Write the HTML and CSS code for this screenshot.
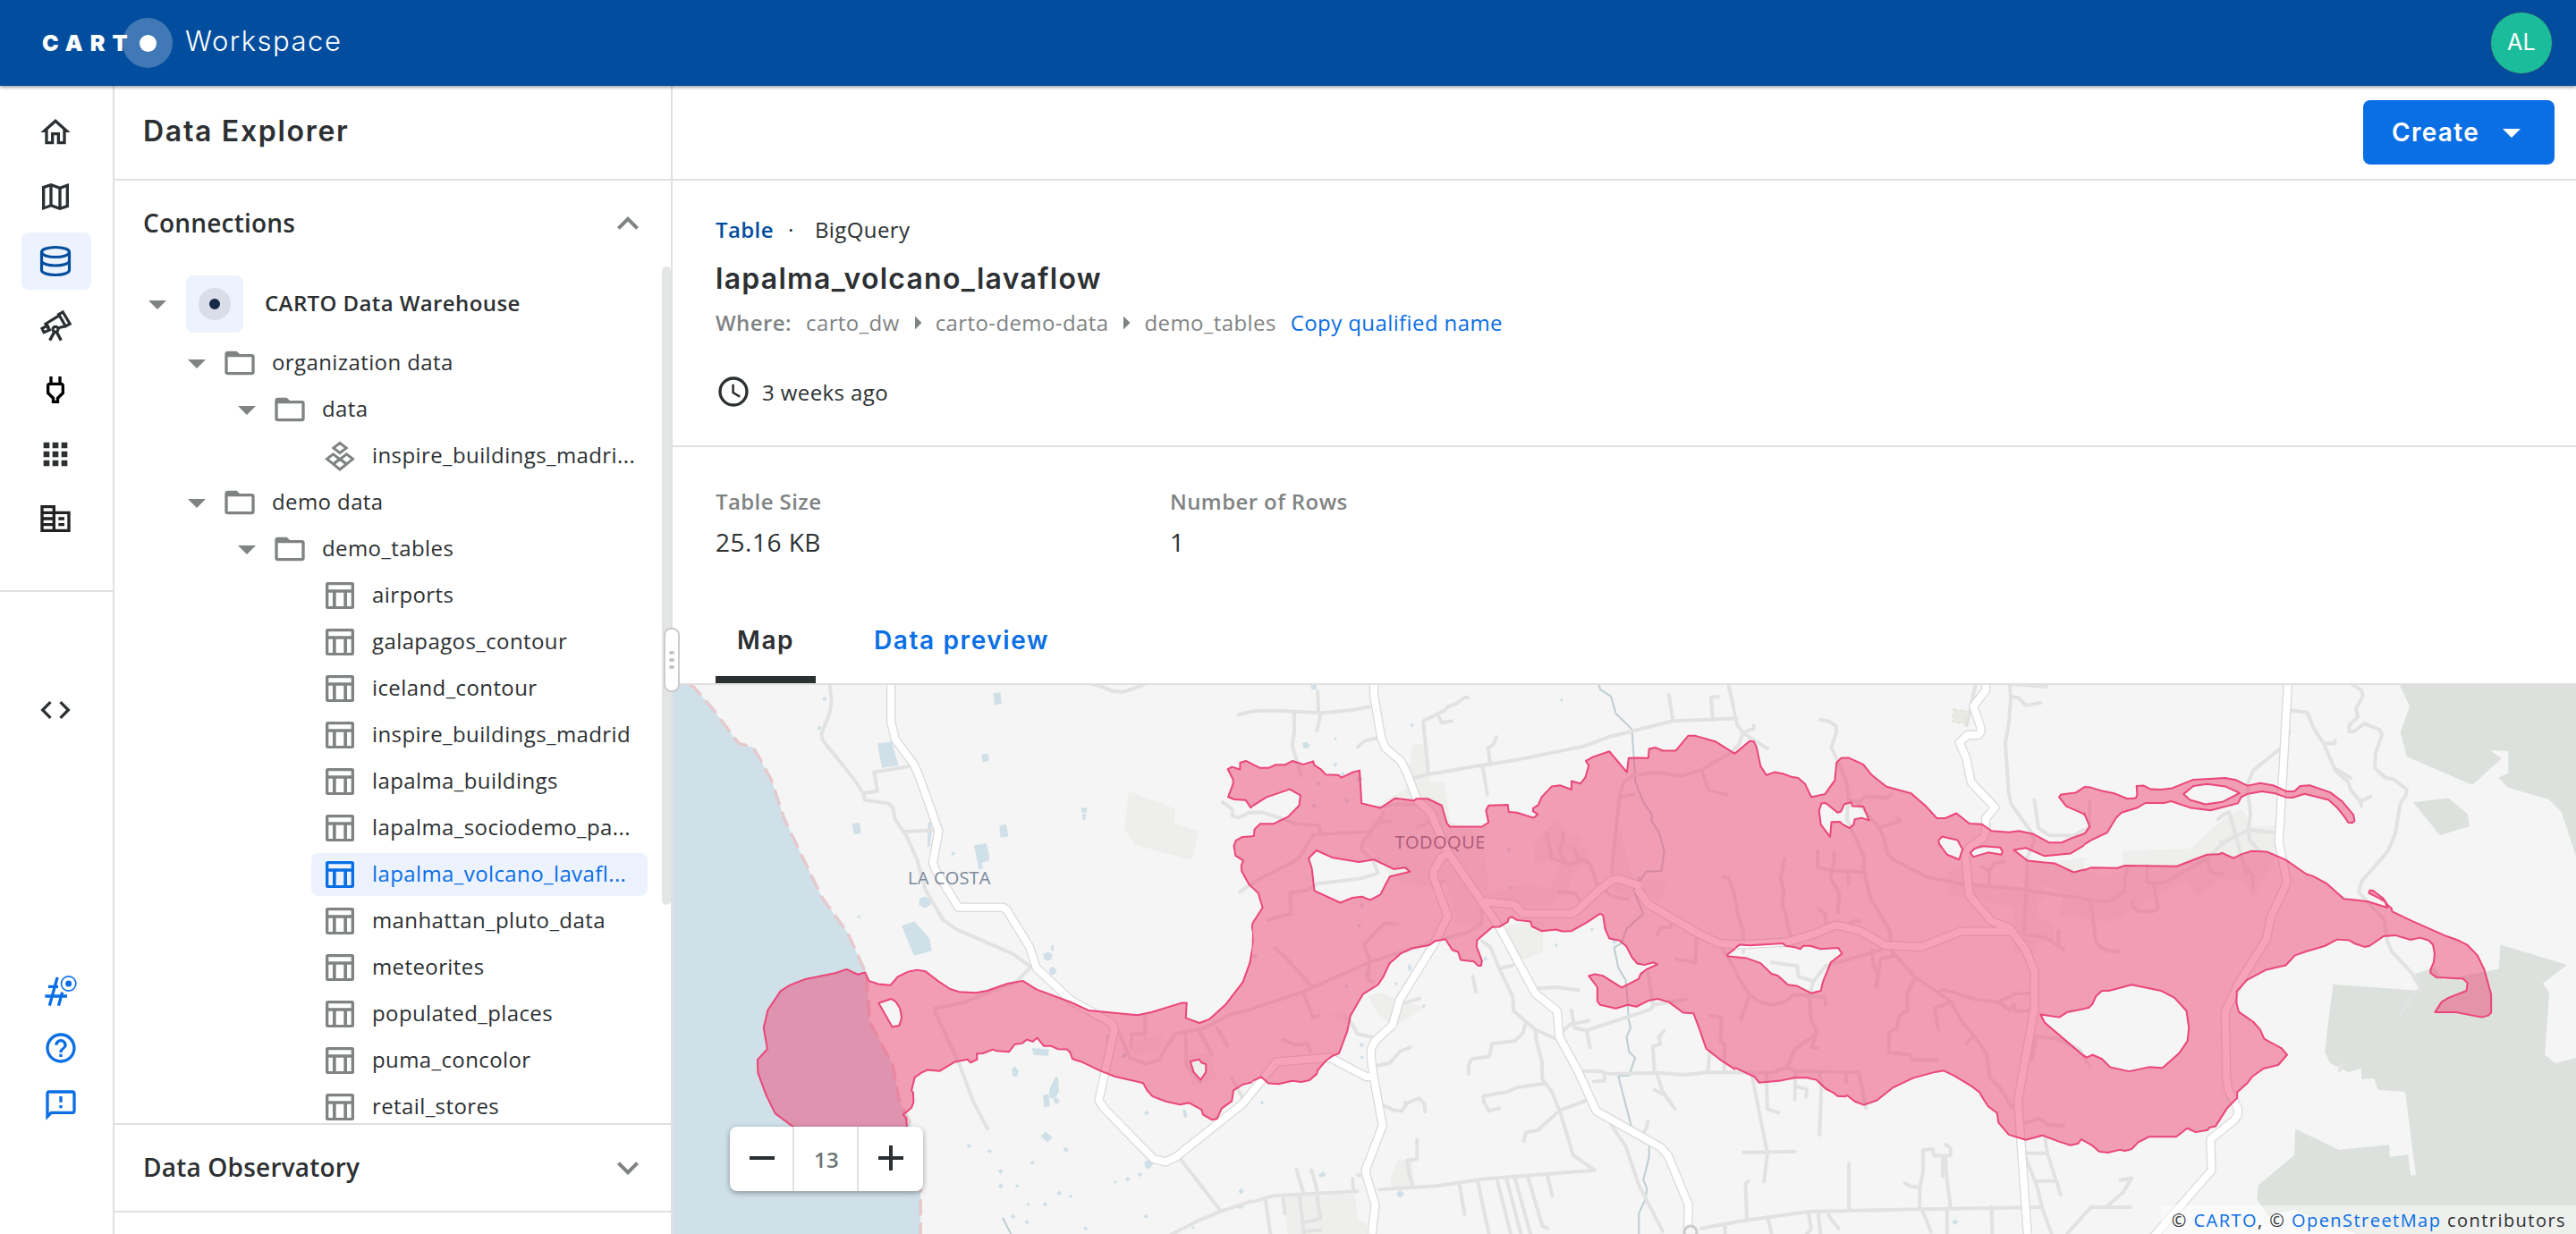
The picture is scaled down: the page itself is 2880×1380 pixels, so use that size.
FILE: index.html
```html
<!DOCTYPE html>
<html lang="en">
<head>
<meta charset="utf-8">
<title>Data Explorer - CARTO Workspace</title>
<link rel="stylesheet" href="styles.css">
</head>
<body>
<svg class="sprite" aria-hidden="true">
  <symbol id="i-home" viewBox="0 0 24 24"><path d="M12 5.69l5 4.5V18h-2v-6H9v6H7v-7.81l5-4.5M12 3 2 12h3v8h6v-6h2v6h6v-8h3L12 3z"/></symbol>
  <symbol id="i-map" viewBox="0 0 24 24"><path fill-rule="evenodd" d="M3 4.9 9 3l6 2.1L21 3v16l-6 2-6-2.1L3 21zM10 5.47v11.66l4 1.4V6.87zM5 6.4v12l3-1.2V5.45zM16 6.86v11.69l3-1.01V5.7z"/></symbol>
  <symbol id="i-db" viewBox="0 0 24 24"><g fill="none" stroke="currentColor" stroke-width="1.9"><ellipse cx="12" cy="6" rx="9.3" ry="3.3"/><path d="M2.7 6v12.2c0 1.7 4.1 3.1 9.3 3.1s9.3-1.4 9.3-3.1V6M2.7 11.9c0 1.7 4.1 3.1 9.3 3.1s9.3-1.4 9.3-3.1"/></g></symbol>
  <symbol id="i-tele" viewBox="0 0 24 24"><g fill="none" stroke="currentColor" stroke-width="1.9"><path d="M17 3l4.7 7.9-2.9 1.6-4.6-7.9zM14.5 5.3 5.4 10.9l2.8 4.6M18.6 12.4l-4.7 1.3"/><path d="M6.6 12 3 14l1.3 2.6L8 15z"/><circle cx="12" cy="14.6" r="1.8"/><path d="M11.3 16.3 8.2 22M12.7 16.3l3.1 5.7" stroke-width="2"/></g></symbol>
  <symbol id="i-plug" viewBox="0 0 24 24"><path d="M16 9v4.66l-3.5 3.51V19h-1v-1.83L8 13.65V9h8m0-6h-2v4h-4V3H8v4h-.01C6.9 6.99 6 7.89 6 8.98v5.52L9.5 18v3h5v-3l3.500-3.510V9c0-1.100-.900-2-2-2V3z"/></symbol>
  <symbol id="i-apps" viewBox="0 0 24 24"><path d="M4 8h4V4H4v4zm6 12h4v-4h-4v4zm-6 0h4v-4H4v4zm0-6h4v-4H4v4zm6 0h4v-4h-4v4zm6-10v4h4V4h-4zm-6 4h4V4h-4v4zm6 6h4v-4h-4v4zm0 6h4v-4h-4v4z"/></symbol>
  <symbol id="i-org" viewBox="0 0 24 24"><path d="M12 7V3H2v18h20V7H12zM10 19H4v-2h6v2zm0-4H4v-2h6v2zm0-4H4V9h6v2zm0-4H4V5h6v2zm10 12h-8V9h8v10zm-2-8h-4v2h4v-2zm0 4h-4v2h4v-2z"/></symbol>
  <symbol id="i-code" viewBox="0 0 24 24"><path d="M9.4 16.6 4.800 12l4.600-4.600L8 6l-6 6 6 6 1.400-1.400zm5.200 0 4.600-4.600-4.600-4.600L16 6l6 6-6 6-1.400-1.400z"/></symbol>
  <symbol id="i-hash" viewBox="0 0 24 24"><g fill="none" stroke="currentColor" stroke-width="2"><path d="M9.700 3 4.400 22M13 13l-2.500 9M3.600 9.200h6.600M1.400 15.600h14.800"/><circle cx="17.200" cy="7.200" r="4.900" stroke-width="1"/></g><circle cx="17.200" cy="7.200" r="2.100"/></symbol>
  <symbol id="i-help" viewBox="0 0 24 24"><path d="M11 18h2v-2h-2v2zm1-16C6.480 2 2 6.480 2 12s4.480 10 10 10 10-4.480 10-10S17.520 2 12 2zm0 18c-4.410 0-8-3.590-8-8s3.590-8 8-8 8 3.590 8 8-3.590 8-8 8zm0-14c-2.210 0-4 1.790-4 4h2c0-1.100.900-2 2-2s2 .900 2 2c0 2-3 1.750-3 5h2c0-2.250 3-2.500 3-5 0-2.210-1.790-4-4-4z"/></symbol>
  <symbol id="i-feedback" viewBox="0 0 24 24"><path d="M20 2H4c-1.100 0-1.990.900-1.990 2L2 22l4-4h14c1.100 0 2-.900 2-2V4c0-1.100-.900-2-2-2zm0 14H5.170L4 17.170V4h16v12zm-9-4h2v2h-2zm0-6h2v4h-2z"/></symbol>
  <symbol id="i-down" viewBox="0 0 24 24"><path d="M7 10l5 5 5-5z"/></symbol>
  <symbol id="i-right" viewBox="0 0 24 24"><path d="M10 17l5-5-5-5z"/></symbol>
  <symbol id="i-more" viewBox="0 0 24 24"><path d="M16.590 8.590 12 13.170 7.410 8.590 6 10l6 6 6-6z"/></symbol>
  <symbol id="i-less" viewBox="0 0 24 24"><path d="M12 8l-6 6 1.410 1.410L12 10.830l4.590 4.580L18 14z"/></symbol>
  <symbol id="i-folder" viewBox="0 0 24 24"><path fill-rule="evenodd" d="M10 4H4a2 2 0 0 0-2 2v12a2 2 0 0 0 2 2h16a2 2 0 0 0 2-2V8a2 2 0 0 0-2-2h-8zM4 8v10h16V8z"/></symbol>
  <symbol id="i-tiles" viewBox="0 0 24 24"><path fill="none" stroke="currentColor" stroke-width="1.800" d="M12 3.200l4.300 3.400L12 10 7.700 6.600zM7.500 10.700l4.200 3.300-4.200 3.300L3.300 14zM16.500 10.700l4.200 3.300-4.200 3.300-4.200-3.300zM7.700 17.500 12 21l4.300-3.500L12 14z"/></symbol>
  <symbol id="i-table" viewBox="0 0 24 24"><path fill-rule="evenodd" d="M3.900 3h16.200a1.500 1.500 0 0 1 1.500 1.500v15a1.500 1.500 0 0 1-1.500 1.500H3.900a1.500 1.500 0 0 1-1.500-1.500v-15A1.500 1.500 0 0 1 3.900 3zM4.400 4.900V8h15.200V4.900zM4.400 10v9.200h2.800V10zM9.400 10v9.200h5.200V10zM16.800 10v9.200h2.800V10z"/></symbol>
  <symbol id="i-clock" viewBox="0 0 24 24"><g fill="none" stroke="currentColor"><circle cx="12" cy="12" r="9" stroke-width="2"/><path d="M11.750 7v5.600l4.600 2.800" stroke-width="1.500"/></g></symbol>
</svg>

<header class="topbar">
  <div class="logo"><span class="logo-text">CART</span><span class="logo-halo"><i></i></span></div>
  <span class="product">Workspace</span>
  <span class="avatar">AL</span>
</header>

<div class="shell">
  <nav class="rail">
    <div class="rail-main">
      <a class="rail-item"><svg><use href="#i-home"/></svg></a>
      <a class="rail-item"><svg><use href="#i-map"/></svg></a>
      <a class="rail-item active"><svg><use href="#i-db"/></svg></a>
      <a class="rail-item"><svg><use href="#i-tele"/></svg></a>
      <a class="rail-item black"><svg><use href="#i-plug"/></svg></a>
      <a class="rail-item"><svg><use href="#i-apps"/></svg></a>
      <a class="rail-item dark"><svg><use href="#i-org"/></svg></a>
    </div>
    <div class="rail-dev"><a class="rail-item"><svg><use href="#i-code"/></svg></a></div>
    <div class="rail-foot">
      <svg><use href="#i-hash"/></svg>
      <svg><use href="#i-help"/></svg>
      <svg><use href="#i-feedback"/></svg>
    </div>
  </nav>

  <aside class="sidebar">
    <h1 class="side-title">Data Explorer</h1>
    <section class="connections">
      <div class="section-head"><h2>Connections</h2><svg><use href="#i-less"/></svg></div>
      <div class="tree">
        <div class="row root"><svg class="caret"><use href="#i-down"/></svg><span class="badge"><i></i></span><b>CARTO Data Warehouse</b></div>
        <div class="row l1"><svg class="caret"><use href="#i-down"/></svg><svg class="ico"><use href="#i-folder"/></svg><span>organization data</span></div>
        <div class="row l2"><svg class="caret"><use href="#i-down"/></svg><svg class="ico"><use href="#i-folder"/></svg><span>data</span></div>
        <div class="row leaf"><svg class="ico"><use href="#i-tiles"/></svg><span>inspire_buildings_madri...</span></div>
        <div class="row l1"><svg class="caret"><use href="#i-down"/></svg><svg class="ico"><use href="#i-folder"/></svg><span>demo data</span></div>
        <div class="row l2"><svg class="caret"><use href="#i-down"/></svg><svg class="ico"><use href="#i-folder"/></svg><span>demo_tables</span></div>
        <div class="row leaf"><svg class="ico"><use href="#i-table"/></svg><span>airports</span></div>
        <div class="row leaf"><svg class="ico"><use href="#i-table"/></svg><span>galapagos_contour</span></div>
        <div class="row leaf"><svg class="ico"><use href="#i-table"/></svg><span>iceland_contour</span></div>
        <div class="row leaf"><svg class="ico"><use href="#i-table"/></svg><span>inspire_buildings_madrid</span></div>
        <div class="row leaf"><svg class="ico"><use href="#i-table"/></svg><span>lapalma_buildings</span></div>
        <div class="row leaf"><svg class="ico"><use href="#i-table"/></svg><span>lapalma_sociodemo_pa...</span></div>
        <div class="row leaf selected"><svg class="ico"><use href="#i-table"/></svg><span>lapalma_volcano_lavafl...</span></div>
        <div class="row leaf"><svg class="ico"><use href="#i-table"/></svg><span>manhattan_pluto_data</span></div>
        <div class="row leaf"><svg class="ico"><use href="#i-table"/></svg><span>meteorites</span></div>
        <div class="row leaf"><svg class="ico"><use href="#i-table"/></svg><span>populated_places</span></div>
        <div class="row leaf"><svg class="ico"><use href="#i-table"/></svg><span>puma_concolor</span></div>
        <div class="row leaf"><svg class="ico"><use href="#i-table"/></svg><span>retail_stores</span></div>
      </div>
      <div class="scrollbar"></div>
    </section>
    <div class="section-head observatory"><h2>Data Observatory</h2><svg><use href="#i-more"/></svg></div>
    <div class="resizer"><i></i><i></i><i></i></div>
  </aside>

  <main class="main">
    <div class="toolbar"><button class="create">Create<svg><use href="#i-down"/></svg></button></div>
    <section class="summary">
      <p class="kind"><b>Table</b><span class="dot">·</span><span>BigQuery</span></p>
      <h2 class="name">lapalma_volcano_lavaflow</h2>
      <p class="where"><b>Where:</b><span>carto_dw</span><svg><use href="#i-right"/></svg><span>carto-demo-data</span><svg><use href="#i-right"/></svg><span>demo_tables</span><a>Copy qualified name</a></p>
      <p class="updated"><svg><use href="#i-clock"/></svg>3 weeks ago</p>
    </section>
    <section class="stats">
      <dl><dt>Table Size</dt><dd>25.16 KB</dd></dl>
      <dl><dt>Number of Rows</dt><dd>1</dd></dl>
    </section>
    <div class="tabs"><span class="tab current">Map</span><span class="tab">Data preview</span></div>

    <div class="map">
      <svg class="canvas" viewBox="752 766 2128 614">
        <svg x="750" y="760" width="650" height="620" viewBox="0 0 1415.6 1568" preserveAspectRatio="none">
          <defs><path id="road-a" d="M536 0V120L547 170 592 240 605 275 652 428 638 518 645 540 700 644H808L817 650 873 755 890 815 975 908 1072 970 1080 990 1042 1190 1055 1213 1175 1355 1205 1364 1230 1350 1392 1200 1475 1082 1600 1070"/></defs>
          <path class="sea" d="M0 0H35L55 20 100 80 165 180 200 192 215 220 245 285 275 390 330 525 370 620 430 715 475 830 485 970 540 1090 556 1190 585 1260 608 1450 608 1568H0Z"/>
          <path class="land" d="M1115 315 1228 366 1226 408 1286 428 1269 511 1130 468 1105 425zM1125 1020 1200 1005 1190 1055 1130 1060zM1255 1060 1310 1055 1330 1130 1270 1145z"/>
          <path class="pond" d="M503 181 538 175 554 243 514 250zM785 38 802 36 806 68 788 72zM757 211 773 210 774 230 759 233zM441 407 459 404 464 434 446 438zM626 403H633L635 428 631 472H625zM800 412 817 410 822 444 803 447zM738 469 768 463 776 498 774 513 758 518 760 535 749 537 747 517zM1000 362H1013V376H1000zM1001 380H1012L1009 397H1003zM605 620 618 613 633 622 633 637 618 646 604 637zM562 696 593 684 630 732 636 767 592 781zM878 1042 920 1045V1064L884 1062zM907 777 918 770 930 778 926 791 917 796 908 790zM920 820 930 811 940 823 934 834 925 836zM926 753 932 750V766L926 768zM830 1102 838 1094 847 1108 842 1124 833 1122zM921 1160 936 1124H943L945 1165 935 1185 923 1183zM906 1175 921 1172 923 1206 909 1211zM930 1188 940 1182 947 1192 938 1202zM901 1292 912 1278 930 1296 917 1309zM955 1328 962 1322 969 1331 962 1338zM797 1389 803 1384 810 1391 802 1399zM797 1432 803 1424 810 1432 802 1441zM1152 1225 1159 1219 1165 1226 1158 1233zM1246 1217 1253 1215 1258 1235 1250 1240zM1153 1365 1164 1357 1175 1370 1165 1384 1155 1380zM1382 1448 1389 1439 1396 1448 1388 1456zM1106 1413 1112 1406 1119 1413 1112 1420zM1136 1400 1143 1393 1149 1400 1142 1407zM939 1453 946 1445 952 1453 946 1460zM905 1484 912 1477 918 1484 911 1491zM861 1534 867 1528 873 1535 866 1542zM826 1518 833 1511 840 1519 833 1525zM1151 1518 1157 1512 1163 1518 1157 1524zM1004 1551 1010 1546 1016 1552 1010 1558zM874 1366 880 1360 887 1366 880 1372zM770 1334 776 1328 782 1334 776 1340zM720 1319 726 1312 732 1319 726 1325zM682 492 687 486 693 492 687 498zM356 137 362 130 367 137 361 144zM370 50H379L378 60H370zM453 671 458 666 462 671 458 676zM968 1462 974 1456 979 1462 973 1467zM838 1432 843 1427 848 1432 843 1438zM1077 1421 1082 1416 1087 1421 1082 1426zM866 1484 870 1479 875 1484 870 1490zM1058 1010 1065 1004 1070 1016 1062 1024zM1095 1070 1105 1052 1111 1060 1104 1070zM1380 1493 1388 1485 1396 1492 1385 1498zM1266 1550 1272 1546 1277 1550 1271 1555z"/>
          <path class="coast" d="M45 15 55 20 100 80 165 180 200 192 215 220 245 285 275 390 330 525 370 620 430 715 475 830 485 970 540 1090 556 1190 585 1260 608 1450 608 1568"/>
          <path class="minor" d="M387 10 391 62 387 95 367 152 370 172 445 280 470 325 472 341 530 350 540 362 547 398 573 440 600 510 620 595 663 680 695 706 833 776 877 813 840 855 708 915 643 930 645 945 700 1080 737 1195 771 1270M577 246 495 262 503 315 468 322M567 430 637 426M1015 10 1045 18 1075 32 1100 35 1120 28 1155 12M1382 100 1410 91 1465 88M1343 346 1367 367 1368 386 1383 391 1407 377 1440 375M1385 600 1430 567M1240 1355 1340 1504M1200 1580 1285 1530 1340 1504 1420 1473 1480 1458M1090 997 1118 1070 1155 1087 1190 1075 1205 1040 1230 1002 1300 985 1366 945 1430 930M1155 950V1003H1122L1120 1040M1253 1003 1255 1090 1290 1140M1285 990 1317 1060M1330 985 1355 1035M1365 1125 1395 1190"/>
          <path class="stream" d="M808 1522 828 1568"/>
          <use href="#road-a" class="casing"/><use href="#road-a" class="major"/>
          <path class="lava" d="M578 1300 573 1240 566 1230 586 1211 591 1195 590 1168 586 1162 594 1125 610 1112 625 1104 655 1107 690 1082 722 1074 730 1083 746 1074 745 1058 760 1057 785 1046 792 1050 823 1053 838 1031 855 1029 867 1018 881 1024 892 1013 908 1036 925 1036 942 1045 965 1046 972 1054 978 1073 1000 1081 1045 1106 1082 1123 1150 1141 1160 1162 1173 1179 1205 1193 1240 1202 1262 1197 1292 1216 1296 1231 1318 1245 1330 1242 1341 1213 1366 1192 1370 1162 1393 1145 1425 1136 1438 1125 1455 1142 1600 1130 1600 232 1568 232 1555 240 1535 236 1513 230 1495 239 1470 242 1453 252 1435 250 1415 238 1400 230 1386 235 1386 254 1366 247 1356 253 1369 283 1369 295 1357 332 1372 339 1400 341 1412 362 1450 333 1507 310 1533 327 1531 356 1503 388 1467 408 1435 408 1421 424 1422 443 1392 445 1376 455 1371 470 1375 498 1394 512 1389 525 1390 542 1408 580 1431 603 1441 645 1417 688 1415 700 1418 715 1417 755 1410 800 1393 855 1350 920 1312 960 1287 971 1254 957 1256 914 1245 914 1170 941 1136 949 1018 936 975 913 890 876 857 852 820 860 770 880 743 886 702 883 680 875 650 852 620 825 600 821 578 826 553 840 535 864 505 861 482 852 473 828 455 834 428 819 400 830 325 848 290 864 267 881 236 935 226 985 235 1045 211 1075 212 1112 232 1175 254 1227 298 1265 340 1300ZM506 915 537 903 547 910 558 930 562 957 556 979 539 982ZM1265 1080 1286 1074 1292 1083 1303 1088V1110L1290 1132 1273 1110Z"/>
        </svg>

        <svg x="1400" y="760" width="540" height="620" viewBox="130.67 0 1176 1568" preserveAspectRatio="none">
          <defs><path id="road-b" d="M427 0V45L445 165 455 193 492 230 507 262 532 340 565 375 605 485 735 705 820 888 873 937 878 1010 925 1110 968 1220 1125 1323 1143 1346 1193 1485 1191 1568M607 492 590 505 573 540 572 560 607 668 575 745 490 905 472 977 430 1022 420 1045V1070L425 1115 448 1262 407 1385 408 1400 430 1485 422 1568M-80 1364 107 1200 190 1081 320 1069 408 1123H423M695 627 770 637 790 662H908L925 650 975 595 1005 568 1022 563 1078 585M1067 590 1095 635 1220 720 1265 745 1310 750 1435 742 1510 718"/></defs>
          <path class="land" d="M522 184 560 181 563 290 598 288 612 400 690 440 710 600 790 580 855 590 888 500 818 520 818 460 875 390 890 440 928 440 928 475 948 475 950 520 905 550 900 600 850 640 690 640 690 700 630 690 600 560 545 588 470 565 440 500 400 470 420 400 520 330 440 350 505 310zM750 695 840 680 838 770 775 800 750 760zM412 895 440 885 525 920 553 925 480 980 440 950zM485 1360 520 1356 523 1435H470L468 1410zM205 1462 380 1455 390 1530 410 1535V1568H218zM320 950 350 935 395 990zM1000 530 1025 420 1055 560 1140 570 1125 620 1070 620 1010 600zM60 960 85 950 90 1010 60 1020z"/>
          <path class="pond" d="M273 15H288L287 28H275zM253 180 262 176 271 184 268 194 255 194zM515 127 520 123 525 130 519 135zM329 166 333 161 337 167 333 172zM328 240 333 234 338 241 333 248zM345 266 351 260 356 268 350 275zM385 275H398V287H386zM287 293 292 287 298 294 292 301zM275 356 282 350 288 357 281 364zM355 342 361 335 368 343 361 351zM750 480 755 473 760 480 755 487zM392 639 397 632 404 639 398 646zM385 696 391 689 396 696 390 703zM755 588 760 582 765 588 760 594zM867 750 872 745 875 752 871 759zM953 706 959 701 963 706 958 713zM510 808 517 805 519 820 511 825zM477 860 482 855 486 860 481 866zM693 788 699 782 704 790 698 795zM355 866 361 861 365 868 360 875zM404 832 410 825 415 833 409 840zM391 1033 397 1026 403 1034 397 1041zM393 1068 398 1062 403 1069 398 1075zM150 1196 155 1190 160 1197 154 1202zM481 1455 490 1443 501 1454 491 1467zM290 1404 303 1391 310 1400 303 1408zM97 1447 104 1439 111 1448 104 1457zM133 782 138 775 144 782 138 789zM1005 738 1012 733 1019 741 1012 750zM1066 560 1075 555 1076 568 1068 570zM498 1196 504 1191 508 1197 503 1202zM880 58 884 52 888 58 884 63zM433 504 438 499 442 505 437 510zM544 922 549 917 553 923 548 928z"/>
          <path class="stream" d="M975 12 978 28 1004 47 1016 96 1055 140 1064 290 1082 345 1104 382 1103 400 1121 432 1134 485 1127 541 1089 543 1075 570 1060 597 1083 662 1042 705 1030 745 1012 758 1022 815 1040 850 1044 900 1047 960 1052 985 1042 1010 1048 1052 1063 1070 1048 1120 1022 1121 1054 1265M1097 1320V1350L1083 1415 1092 1440 1088 1470 1072 1510V1568"/>
          <path class="minor" d="M97 100 130 90 180 87 300 94 375 86 415 77M290 33 292 95 297 97 288 145M233 92V150L228 185 250 272M388 190 405 173 437 165M656 52 648 50 630 67 606 77 600 87 547 117 553 190 560 268M582 97 592 122 617 117M527 277 560 268 680 244 770 228 940 188 1000 162 1155 117 1308 110M725 162 719 182 705 194 710 240M692 248 703 325M1145 43 1155 115M1265 48 1248 50 1252 115M1290 15 1312 125 1325 150 1385 195M1325 150 1314 180 1300 205M58 346 82 367 83 386 98 391 122 377 155 375 200 392 238 408 293 413 297 435M100 600 155 560 242 508 280 438 415 430M170 680 225 662 223 603 262 597 290 577 392 563 437 548 425 512M187 760 215 790 275 867M0 985 75 945 118 935 250 885 415 800 575 740 655 715 690 690V645M255 885 278 955 293 950M485 692 456 689 440 703 403 750 417 797 412 850 425 856M205 1018 237 1033 265 1030 272 1050M40 985 70 1030M80 1125 105 1185M365 960 387 1002 420 1010M690 740 710 755 732 817 765 897 767 937 820 990 868 1015 905 975 950 965M732 817 765 808M668 840 675 883M825 873 873 870 925 879M500 915 538 902M908 935 915 985 945 992 1100 933 1108 920 1187 904M945 992 953 1040M1095 830 1107 925M795 975 790 1000 770 1022 715 1030 708 1066 665 1073 657 1090 658 1115M820 990 822 1020 836 1080 837 1130 860 1165 880 1222 912 1345 965 1388 700 1412 580 1432 440 1442M387 1447 180 1460 130 1478 0 1535M845 1142 777 1153 755 1165 693 1178 695 1195 707 1220 732 1212M945 1190 880 1218 825 1275 797 1280 792 1305M515 1040 490 1052 465 1085 430 1093M448 1203 475 1218 495 1220 508 1198 537 1184 550 1200 552 1222M532 1300V1356L508 1360 513 1400 523 1435M388 1402H400M375 1412 377 1445M238 1385 255 1450M275 1387 290 1450M-30 1405 57 1505M163 1470 175 1568M205 1462 210 1510M245 1455 257 1568M287 1450 297 1525 257 1535M257 1560 297 1557M635 1428 648 1512M680 1420 707 1568M727 1415 760 1568M750 1413 785 1568M771 1412 808 1568M803 1410 837 1545 850 1552M850 1405 861 1460M1005 1260 1040 1320 1072 1430 1130 1560M1080 1285 1090 1270 1094 1250M935 1108 975 1107 1000 1115 1115 1112 1185 1118 1240 1110 1370 1112 1430 1105M962 1137 988 1134V1115M1115 1112 1130 1165 1160 1215M1110 1160 1130 1172M1133 993 1120 1012 1125 1030 1106 1038 1110 1110M1240 1110 1245 1050M1246 950 1273 955 1271 1025 1280 1030V1110M1223 1552 1330 1530 1480 1505M1338 1418 1331 1428 1335 1528M1282 1540V1568M1030 560M1005 545 1025 330 1035 290 1060 270 1115 263 1175 273 1225 255 1300 205M1030 332 1060 324M1225 258 1242 313 1285 325M848 432 860 505 905 523 935 508 955 525 970 580M888 432 885 465 878 480 890 515M912 475 925 510M878 600 915 603 928 622M985 590 1005 613 1045 620M1277 558 1290 560 1300 590 1328 715 1325 745M1117 722 1125 702 1150 700 1150 690M1163 790 1210 800 1212 730M1270 750 1290 790 1345 890M440 400 468 402M440 360 480 352 530 355M395 480 400 460 440 400 450 375M395 480 425 510M533 418 565 400M1450 742M590 572 600 570"/>
          <use href="#road-b" class="casing"/><use href="#road-b" class="major"/>
          <text class="place" transform="translate(478 478) scale(2.1778 2.529)">TODOQUE</text>
          <path class="lava" d="M80 250 116 231 150 250 170 250 188 241 210 241 229 230 255 240 279 231 282 242 297 253 310 269 340 270 348 277 375 262 392 257 397 350 443 363 478 336 525 342 530 337 558 337 592 356 605 407 612 416 690 416 706 404 700 370 706 356 753 354 755 374 775 376 816 391 826 381 814 372 815 363 827 355 835 333 860 302 880 299 908 311 908 287 930 294 942 276 950 243 943 230 960 219 1000 203 1043 262 1047 222 1066 221 1095 222 1097 196 1112 192 1130 201 1162 201 1192 159 1210 159 1258 175 1305 209 1345 174 1357 185 1370 250 1383 270 1450 280V1160L1363 1140 1354 1124 1310 1105 1270 1075 1236 1044 1220 990 1205 944 1180 942 1145 912 1118 903 1095 908 1066 925 1045 920 1016 930 978 920 971 910 971 870 950 838 965 833 985 838 1030 871 1072 846 1076 833 1090 820 1117 805 1108 800 1085 807 1068 803 1055 785 1042 755 1025 738 1000 732 990 705 985 667 978 662 945 687 908 711 885 712 870 707 835 711 812 698 808 684 775 680 763 671 755 675 753 685 733 699 715 700 678 737 677 755 690 795 688 809 680 809 670 797 638 793 632 770 618 765 601 734 575 740 562 751 520 760 492 775 465 803 450 840 437 863 400 890 370 950 362 995 342 1057 325 1065 310 1078 290 1105 288 1115 270 1133 250 1138 228 1135 195 1144 170 1142 153 1124 120 1141 85 1162H0V971L28 960 65 920 107 858 125 790 132 740 130 700 132 688 156 645 145 603 123 580 105 540 109 512 91 500 86 470 95 448 135 442 136 424 150 408 182 408 218 388 245 356 248 327 222 310 165 333 125 362 80 340ZM268 505 287 483 325 503 390 516 427 509 475 536 503 532 515 543 466 557 455 580 443 608 418 623 398 614 375 617 345 631 282 597 276 535ZM1288 777 1320 750 1450 748V850L1365 802 1330 788 1288 782Z"/>
        </svg>

        <svg x="1940" y="760" width="390" height="620" viewBox="365.9 0 1019.2 1568" preserveAspectRatio="none">
          <defs><path id="road-c" d="M1098 0V30L1062 75 1083 135V148L1075 157H1045L1021 178 1041 222 1055 290 1125 362 1098 392V430L1090 448 1050 475 1038 495 1050 610 1115 683 1168 703 1215 765 1240 825V930L1193 1185V1205L1220 1568M200 690 320 745 380 750 520 742 600 718 660 694 730 710 805 752 908 756 1025 712H1168"/></defs>
          <path class="land" d="M985 545 1040 520 1040 580 1215 590 1215 530 1230 520 1300 515 1415 500 1440 562 1490 550V485H1600V670L1520 680 1315 670 1320 600 1267 580V620H1250V670L1295 690V735L1245 745V775H1180V645L985 605z"/>
          <path class="plot" d="M1003 84 1042 88 1038 124 1000 120z"/>
          <path class="pond" d="M999 1534 1008 1526 1018 1534 1008 1543z"/>
          <path class="minor" d="M200 115 370 112M345 15 370 125 388 150 460 195M388 150 420 138V130M388 150 378 180 365 200 265 258 210 272M265 258 285 310 345 325M615 114 640 118 661 132V150L647 192 690 285 697 330 692 395 742 500V540L760 615 818 712 820 745M697 340 730 345 745 330 808 335 820 325M725 350 785 418 800 445 808 490 830 510 930 560 1040 580 1175 590 1450 628 1500 600M785 418 850 400 838 392M607 485V532L650 540 742 545M655 490V510L648 545 645 562 670 605 666 660M697 545V580M330 558 345 560 360 590 372 660 390 715V770M510 508 499 560 508 600 503 635 515 670 520 700 530 725M610 648 628 662 632 690M1068 15 1042 130M1168 15 1171 50 1166 120 1155 180 1165 320 1172 352 1230 430 1240 455M1171 48 1195 52 1215 73 1258 66M1171 12 1275 20M1240 340 1252 420 1283 440 1355 442 1400 415 1398 345M1240 455 1220 500 1210 720 1270 728 1325 763M1310 710V750M1087 530 1108 540 1125 518 1150 516M1108 540V580M1405 628 1425 745 1440 762 1483 770M247 730 252 800 195 790M320 760 330 790 358 802 370 835 408 892 383 960M408 892 440 912 475 920 510 912 540 890 628 898 630 918M472 800 548 810 550 840 595 853 630 810 710 788 800 760M595 853 582 895 588 965 605 995 590 1040 605 1042M600 1005 540 1045 518 1095 480 1108M290 950 323 955 321 1025 335 1030V1110M200 1118 285 1110 420 1112 480 1110 518 1097 545 1108 727 1110 748 1212M285 1110 290 1060M690 1112V1138M415 1120 460 1340 450 1420M390 1337 540 1335M457 1120 460 1215 492 1225M542 1105 540 1187M542 1150 575 1158 573 1180M610 1110 618 1140 612 1288M820 765 890 840 995 910 1030 970 1062 1005 1100 1058 1110 1125 1140 1155 1175 1210M765 765 770 805 783 840 778 870M783 840 790 790 825 782M890 845 868 890 870 935 845 950 838 985 815 998V1055L875 1060 882 1075 957 1076M960 882 975 876 1070 905 1135 912 1185 887 1225 888M995 912 948 930 960 990M1062 1010 1042 1028M1135 912 1168 935 1180 920 1185 938 1225 936M1245 1010 1305 1015 1370 1045 1402 1092M1245 1010 1232 1075M1210 1255 1252 1242 1285 1260 1325 1262M200 1560 340 1537 580 1505 905 1498 1262 1492M405 1418 396 1425 400 1528M698 1368V1500M862 1424 880 1434 905 1436M905 1498V1436L915 1390V1330L943 1328 947 1347H995V1325L980 1315M980 1347 985 1420 995 1490M972 1350V1405M335 1540V1568M462 1525 472 1568M580 1508 588 1555 575 1568M608 1505 615 1568M635 1505 645 1525 668 1553M912 1500 938 1562M985 1495V1568M1115 1490 1117 1568M1270 1290 1278 1340 1317 1457M1215 1340H1278M1212 1345 1250 1440 1262 1492 1290 1568M1245 1418 1300 1418M1520 1492H1405L1335 1568M1450 1490 1495 1450 1520 1410 1490 1415M1530 620 1535 650 1568 655M700 690 712 682 730 683M138 722 150 703 180 700"/>
          <use href="#road-c" class="casing"/><use href="#road-c" class="major"/>
          <path class="lava" d="M260 165 305 175 335 192 365 209 408 174 420 175 428 190 440 245 457 270 480 262 505 266 530 275 550 278 570 295 588 332 628 324 657 285 662 235 675 222 697 221 740 240 765 270 808 303 880 322 925 360 955 392 980 392 1012 378 1050 407 1087 409 1115 428 1165 432 1195 428 1235 436 1283 461 1320 461 1345 450 1388 435 1401 415 1385 380 1333 358 1312 332 1318 325 1360 320 1388 303 1430 312 1520 335V360L1490 380 1455 432 1400 460 1345 492 1270 499 1215 476 1180 482 1220 512 1300 520 1355 545 1402 533 1480 532 1520 527V868L1458 880H1438L1420 900 1401 928 1335 941 1313 955 1258 947 1270 970 1390 1069 1410 1061 1520 1107V1330L1490 1330 1458 1338 1430 1336 1410 1319 1377 1300 1368 1312 1345 1317 1310 1306 1263 1289 1215 1302 1165 1287 1135 1253 1131 1226 1105 1207 1090 1185 1080 1168 1055 1149 1005 1120 975 1106 950 1110 885 1127 825 1155 780 1190 742 1203 715 1193 693 1176 688 1179 665 1178 652 1168 630 1157 603 1132 575 1126 540 1126 500 1134 435 1140 423 1124 370 1100 320 1075 280 1044 262 990 240 940ZM343 777 378 750 410 752 505 746 513 753 540 757 556 762 565 753 585 753 615 762 667 759 678 775 645 800 622 855 616 880 588 887 545 866 520 863 490 837 472 832 440 802 400 788 343 782ZM611 370 618 350 630 349 665 376 675 373 685 352 705 347 708 358 740 359 757 398 735 391 715 395 712 410 700 420 678 408 672 402 647 403 643 445 616 410ZM960 455 970 444 1015 454 1030 480 1020 509 985 495 962 465ZM1053 490 1065 478 1090 471 1140 475 1147 487 1143 495 1105 489 1062 501Z"/>
        </svg>

        <svg x="2330" y="760" width="550" height="620" viewBox="130.67 0 1437.3 1568" preserveAspectRatio="none">
          <defs><path id="road-d" d="M727 0 700 460 722 565V577L677 670 663 735 583 858 543 940 547 1130 552 1160 580 1213V1230L570 1245 500 1300 503 1375V1388L330 1580"/></defs>
          <path class="wood" d="M1050 10 1082 75 1055 150 1074 218 1265 298 1350 223 1317 200 1370 202V264L1341 277 1370 306 1488 338 1526 375 1568 500V0zM1092 347 1195 335 1251 380 1257 415 1170 440zM1347 750 1542 807 1471 859 1490 885 1477 1061 1507 1085 1568 1070V1568H925L745 1500 670 1518 636 1470 640 1430 745 1345 748 1271 876 1330 1022 1316 1024 1350 1077 1343 1085 1402H1100L1069 1166 989 1160 978 1128 942 1130 940 1100 903 1110 850 1085 834 1053 858 862 1112 880 1098 832 1155 815 1180 850 1343 818z"/>
          <path class="land" d="M150 500 95 515 185 560 245 540V485L440 478 550 385 590 365 625 415H690L690 505 625 620 592 567H530L460 615 430 570 210 684 60 670V560z"/>
          <path class="pond" d="M728 143 734 141V157H728z"/>
          <path class="minor" d="M735 87 783 93 800 135 830 180 863 180 864 172M830 180 862 250 910 278M862 255 903 290 910 312 938 345 968 330M938 340 941 358M905 8 941 30 945 47 925 82 931 105 905 130V147L917 148 950 124 995 142 1001 157 983 205 980 250 1010 277 1037 283 1073 310 1072 325 1055 350 1040 435 1019 485 942 570 933 600 965 635 1008 680 1017 740 1030 770 1090 832 1115 875 1090 890 1052 955M700 198 625 257 608 295 612 340 617 380 610 425 540 460 490 505 375 570 340 578 315 572V525M610 425 690 433M610 425 615 455 645 485M555 375 605 550M522 395 540 380 555 375M605 530 625 555 622 590M490 510 502 545 520 550 535 548M335 580 347 650 325 657 290 655 275 645 273 625M0 605 195 628 220 620 250 598V560L257 530M150 628 165 740 175 755 200 767 230 770M147 345V420L100 442M0 1010 50 1015 115 1050 148 1092M236 1415 270 1410 245 1450 195 1492M265 1492H152L75 1568M530 458 540 465M878 1105 885 1085"/>
          <use href="#road-d" class="casing"/><use href="#road-d" class="major"/>
          <path class="lava" d="M0 448 30 461 70 461 95 448 134 434 147 415 131 378 80 358 60 338 58 327 65 321 105 317 127 303 150 305 180 314 220 322 257 337 282 335 286 325 284 301 305 300 325 310 355 311 388 307 450 283 543 278 575 284 608 300 645 293 683 299 722 316 745 316 762 301 790 299 850 319 885 345 918 383 921 400 914 405 902 404 893 390 870 362 845 340 775 323 740 334 720 333 690 322 650 316 610 323 590 332 580 350 500 370 440 362 385 344 365 349 310 349 285 363 240 376 225 390 198 433 150 455 95 489 15 500ZM421 324 450 301 490 295 543 302 585 321 535 346 485 353 440 340ZM0 516 48 520 100 544 125 541 150 532 228 533 250 526 402 528 490 495 525 494 533 490 567 505 590 494 620 485 665 487 720 510 780 550 800 556 840 577 890 620 930 624 960 628 1017 645 1010 628 990 617 963 604 965 596 975 597 1005 619 1018 638 1029 647 1031 656 1090 683 1190 726 1225 738 1250 750 1280 780 1300 820 1320 890V942L1312 950 1293 955 1217 941 1156 941 1175 912 1195 900 1248 880 1251 858 1238 846 1160 842 1143 830V820L1152 800 1155 775 1150 750 1138 738 1112 730 1085 736 1040 723 1005 726 965 753 950 756 920 746 905 737 870 735 835 753 780 769 747 780 720 808 662 821 606 850 577 882 576 915 583 940 625 968 645 990 657 1016 708 1043 724 1061 698 1090 655 1100 622 1123 607 1142 578 1167V1183L548 1213 515 1263 497 1267 492 1274 457 1280 432 1269 400 1293H320L288 1309 270 1328 250 1333 235 1330 200 1338 175 1335 155 1318 122 1300 110 1312 90 1317 0 1289ZM5 947 55 955 80 941 144 928 155 918 165 896 183 880 203 880 270 863 355 880 395 900 430 937 437 985 433 1022 410 1055 360 1098 320 1096 262 1108 207 1096 183 1073 155 1061 138 1069 18 970Z"/>
        </svg>
        <circle class="roundabout" cx="1890" cy="1378" r="7"/>
        <text class="place blue" x="1015" y="988.500">LA COSTA</text>
      </svg>
      <div class="zoom"><span class="minus"></span><span class="level">13</span><span class="plus"></span></div>
      <div class="credit">© <a>CARTO</a>, © <a>OpenStreetMap</a> contributors</div>
    </div>
  </main>
</div>
</body>
</html>
```
FILE: styles.css
```css
* { box-sizing: border-box; }
body {
  margin: 0;
  width: 2880px;
  height: 1380px;
  overflow: hidden;
  background: #fff;
  color: #2c3032;
  font-family: "Open Sans", sans-serif;
  font-size: 24px;
  letter-spacing: .4px;
}
h1, h2, p, dl, dt, dd { margin: 0; font-weight: inherit; font-size: inherit; }
b { font-weight: 600; }
svg { fill: currentColor; flex: none; display: block; }
.sprite { position: absolute; width: 0; height: 0; }

.topbar {
  position: relative;
  z-index: 3;
  display: flex;
  align-items: center;
  height: 96px;
  padding: 0 26px 0 47px;
  background: #024d9e;
  color: #fff;
  box-shadow: 0 1px 4px rgba(0, 0, 0, .5);
}
.logo { display: flex; align-items: center; }
.logo-text { position: relative; z-index: 1; font: 900 25px/56px Inter, sans-serif; letter-spacing: 8px; width: 90px; }
.logo-halo {
  width: 56px;
  height: 56px;
  border-radius: 50%;
  background: rgba(255, 255, 255, .25);
  display: grid;
  place-items: center;
}
.logo-halo i { width: 19px; height: 19px; border-radius: 50%; background: #fff; }
.product { margin-left: 14px; padding-bottom: 4px; font: 300 31px/40px Inter, sans-serif; letter-spacing: 1.5px; }
.avatar {
  margin-left: auto;
  width: 70px;
  height: 70px;
  border-radius: 50%;
  border: 1px solid #26487e;
  background: #1abc9c;
  font: 400 25px/67px Inter, sans-serif;
  text-align: center;
}

.shell { display: grid; grid-template-columns: 128px 624px 2128px; height: 1284px; }

.rail { display: flex; flex-direction: column; border-right: 2px solid #e0e0e0; }
.rail-main { display: grid; gap: 8px; padding: 20px 24px 48px; border-bottom: 2px solid #e0e0e0; }
.rail-item { display: flex; align-items: center; width: 78px; height: 64px; padding-left: 18px; border-radius: 8px; }
.rail-item svg, .rail-foot svg { width: 40px; height: 40px; }
.rail-item.active { background: #ecf3fe; color: #024d9e; }
.rail-item.black { color: #000; }
.rail-item.dark { color: #222; }
.rail-dev { padding: 100px 24px 0; }
.rail-foot { margin-top: auto; padding: 0 0 124px 48px; display: grid; gap: 24px; color: #0a6ee5; }

.sidebar { position: relative; display: flex; flex-direction: column; min-height: 0; border-right: 2px solid #e0e0e0; }
.side-title {
  height: 106px;
  padding: 0 32px;
  border-bottom: 2px solid #e0e0e0;
  font: 600 32px/102px Inter, sans-serif;
  letter-spacing: 1.700px;
}
.connections { position: relative; height: 1054px; overflow: hidden; }
.section-head { display: flex; align-items: center; justify-content: space-between; height: 96px; padding: 0 24px 0 32px; }
.section-head h2 { margin-top: -2px; font-weight: 600; font-size: 28px; letter-spacing: .200px; }
.section-head svg { width: 48px; height: 48px; color: #808383; }
.observatory { height: 100px; border: solid #e0e0e0; border-width: 2px 0; }
.tree { display: grid; gap: 4px; padding-top: 10px; }
.row { display: flex; align-items: center; height: 48px; border-radius: 8px; white-space: nowrap; }
.row span, .row b { margin-top: -4px; }
.row .caret { width: 48px; height: 48px; color: #808383; }
.row .ico { width: 40px; height: 40px; margin-right: 16px; color: #808383; }
.row.root { height: 64px; padding-left: 24px; margin-bottom: 6px; }
.row .badge { width: 64px; height: 64px; margin: 0 24px 0 8px; border-radius: 8px; background: #ecf3fe; display: grid; place-items: center; }
.badge i { width: 36px; height: 36px; border: 12px solid #d8dde8; border-radius: 50%; background: #162945; }
.row.l1 { padding-left: 68px; }
.row.l1 .caret { margin-right: 4px; }
.row.l2 { padding-left: 124px; }
.row.l2 .caret { margin-right: 4px; }
.row.leaf { margin: 0 26px 0 220px; padding-left: 12px; }
.row.selected { background: #ecf3fe; color: #0a6ee5; }
.row.selected .ico { color: #0a6ee5; }
.scrollbar { position: absolute; top: 96px; right: 0; width: 10px; height: 714px; border-radius: 5px; background: #e4e6e6; }
.resizer {
  position: absolute;
  z-index: 2;
  right: -10px;
  top: 606px;
  width: 18px;
  height: 72px;
  border: 2px solid #ccc;
  border-radius: 8px;
  background: #fff;
  display: grid;
  align-content: center;
  justify-content: center;
  gap: 4px;
}
.resizer i { width: 6px; height: 4px; border-radius: 2px; background: #c4c4c4; }

.main { display: flex; flex-direction: column; min-width: 0; }
.toolbar { display: flex; justify-content: flex-end; height: 106px; padding: 16px 24px; border-bottom: 2px solid #e0e0e0; }
.create {
  display: flex;
  align-items: center;
  width: 214px;
  height: 72px;
  padding: 0 0 0 32px;
  border: 0;
  border-radius: 8px;
  background: #0a6ee5;
  color: #fff;
  font: 600 28px/72px Inter, sans-serif;
  letter-spacing: 1.300px;
}
.create svg { width: 48px; height: 48px; margin-left: auto; margin-right: 24px; }
.summary { height: 298px; padding: 38px 48px 0; border-bottom: 2px solid #e0e0e0; }
.kind { display: flex; line-height: 34px; }
.kind b { color: #024d9e; }
.kind .dot { width: 46px; text-align: center; padding-right: 7px; }
.name { margin-top: 15px; font: 600 32px/46px Inter, sans-serif; letter-spacing: 1.250px; }
.where { display: flex; align-items: center; margin-top: 8px; line-height: 36px; color: #808383; }
.where b { width: 101px; }
.where svg { width: 40px; height: 36px; }
.where a { margin-left: 16px; color: #0a6ee5; }
.updated { display: flex; align-items: center; gap: 12px; margin-top: 38px; line-height: 44px; }
.updated svg { width: 40px; height: 40px; margin-bottom: 2px; }
.stats { display: grid; grid-template-columns: 508px 509px; padding: 43px 48px 0; height: 160px; }
.stats dt { font-weight: 600; line-height: 36px; color: #808383; }
.stats dd { margin-top: 5px; font-size: 28px; line-height: 44px; letter-spacing: .500px; }
.tabs { display: flex; gap: 40px; height: 106px; padding: 0 48px; border-bottom: 2px solid #e0e0e0; }
.tab { padding: 4px 25px 0; font: 600 28px/104px Inter, sans-serif; letter-spacing: 1.600px; color: #0a6ee5; }
.tab.current { width: 112px; padding-left: 24px; padding-right: 0; border-bottom: 8px solid #2c3032; color: #2c3032; height: 104px; }

.map { position: relative; height: 614px; background: #f5f5f5; overflow: hidden; }
.canvas { width: 2128px; height: 614px; }
.canvas path { vector-effect: non-scaling-stroke; stroke-linejoin: round; }
.sea, .pond { fill: #cfe0e8; }
.land { fill: #eeeeec; }
.wood { fill: #dce1dd; }
.plot { fill: #e8e9e2; stroke: #dcdcd4; stroke-dasharray: 4 3; }
.coast { fill: none; stroke: #e5c9cd; stroke-width: 3.500; stroke-dasharray: 18 8; }
.minor { fill: none; stroke: #e2e2e2; stroke-width: 4; stroke-linecap: round; }
.stream { fill: none; stroke: #bdced2; stroke-width: 2; }
.casing { fill: none; stroke: #d9d9d9; stroke-width: 10.500; }
.major { fill: none; stroke: #fff; stroke-width: 8; }
.roundabout { fill: #f5f5f5; stroke: #ccc; stroke-width: 3; }
.lava { fill: #ee4674; fill-opacity: .5; fill-rule: evenodd; stroke: #ea4679; stroke-width: 2; }
.place { font: 400 20px "Open Sans", sans-serif; letter-spacing: .500px; fill: #6b6f80; paint-order: stroke; stroke: #f5f5f5; stroke-width: 1px; stroke-opacity: .5; }
.place.blue { fill: #7d8a9c; letter-spacing: .200px; }
.zoom {
  position: absolute;
  left: 64px;
  top: 494px;
  display: grid;
  grid-template-columns: 72px 72px 72px;
  height: 72px;
  border-radius: 8px;
  background: #fff;
  box-shadow: 0 2px 6px rgba(0, 0, 0, .35);
}
.zoom span { display: grid; place-items: center; padding-left: 2px; border-right: 2px solid #e0e0e0; }
.zoom .plus { border: 0; padding: 0 0 2px; }
.zoom .minus { padding-bottom: 2px; }
.zoom .level { font-weight: 600; color: #6d7677; }
.minus::before, .plus::before { content: ""; width: 28px; height: 4px; background: #2c3032; grid-area: 1 / 1; }
.plus::after { content: ""; width: 4px; height: 28px; background: #2c3032; grid-area: 1 / 1; }
.credit {
  position: absolute;
  right: 0;
  bottom: 0;
  height: 32px;
  padding: 0 11px 0 12px;
  background: rgba(255, 255, 255, .5);
  font-size: 20px;
  line-height: 34px;
  letter-spacing: 1.450px;
  white-space: nowrap;
}
.credit a { color: #0a6ee5; }
```
